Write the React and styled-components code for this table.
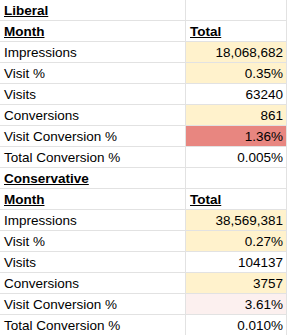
import React from 'react'
import styled, { createGlobalStyle } from 'styled-components'

const Global = createGlobalStyle`
  body {
    margin: 0;
    background: white;
    font-family: "Liberation Sans", Arial, sans-serif;
    color: #000;
  }
`

const Sheet = styled.div`
  display: flex;
  flex-direction: column;
  width: 288px;
`

const Row = styled.div`
  display: grid;
  grid-template-columns: 186px 101px;
`

const Cell = styled.div`
  box-sizing: border-box;
  height: 21px;
  line-height: 21px;
  font-size: 13.5px;
  padding: 0 3px 0 4px;
  border-right: 1px solid #e2e2e2;
  border-bottom: 1px solid #e2e2e2;
  white-space: nowrap;
  overflow: hidden;
  text-align: ${p => (p.$num ? 'right' : 'left')};
  background: ${p => p.$bg || 'white'};
  font-weight: ${p => (p.$head ? 700 : 400)};
  text-decoration: ${p => (p.$head ? 'underline' : 'none')};
  text-decoration-thickness: 1px;
`

const yellow = '#fff2cc'

const sections = [
  {
    name: 'Liberal',
    rows: [
      ['Impressions', '18,068,682', yellow],
      ['Visit %', '0.35%', yellow],
      ['Visits', '63240'],
      ['Conversions', '861', yellow],
      ['Visit Conversion %', '1.36%', '#e88680'],
      ['Total Conversion %', '0.005%'],
    ],
  },
  {
    name: 'Conservative',
    rows: [
      ['Impressions', '38,569,381', yellow],
      ['Visit %', '0.27%', yellow],
      ['Visits', '104137'],
      ['Conversions', '3757', yellow],
      ['Visit Conversion %', '3.61%', '#fcf0ef'],
      ['Total Conversion %', '0.010%'],
    ],
  },
]

export default function App() {
  return (
    <Sheet>
      <Global />
      {sections.map(s => (
        <React.Fragment key={s.name}>
          <Row>
            <Cell $head>{s.name}</Cell>
            <Cell />
          </Row>
          <Row>
            <Cell $head>Month</Cell>
            <Cell $head>Total</Cell>
          </Row>
          {s.rows.map(([label, value, bg]) => (
            <Row key={label}>
              <Cell>{label}</Cell>
              <Cell $num $bg={bg}>{value}</Cell>
            </Row>
          ))}
        </React.Fragment>
      ))}
    </Sheet>
  )
}
